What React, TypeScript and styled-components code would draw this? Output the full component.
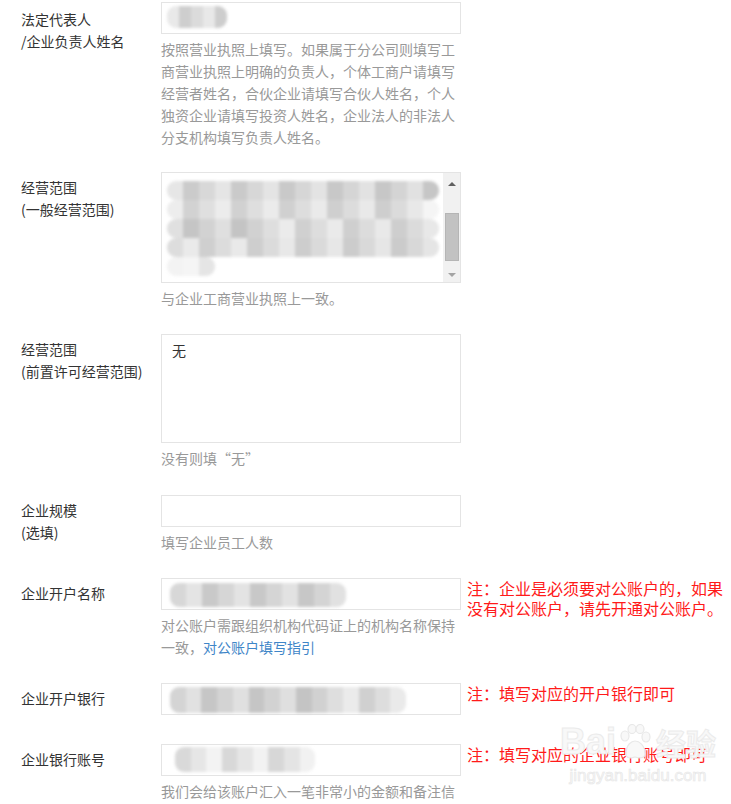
import React from 'react';
import styled, { createGlobalStyle } from 'styled-components';

const GlobalStyle = createGlobalStyle`
  html, body {
    margin: 0;
    background: #fff;
  }
  body {
    font-family: "Noto Sans CJK SC", "Noto Sans", sans-serif;
    font-size: 14px;
    color: #333;
  }
`;

const Page = styled.div`
  position: relative;
  height: 804px;
  overflow: hidden;
  padding: 2px 0 0 21px;
  box-sizing: border-box;
`;

const Row = styled.div<{ $gap: number }>`
  display: grid;
  grid-template-columns: 140px 300px 1fr;
  align-items: start;
  margin-bottom: ${(p) => p.$gap}px;
`;

const Label = styled.div`
  padding-top: 4px;
  font-size: 14px;
  line-height: 22px;
  color: #333;
`;

const Field = styled.div`
  display: flex;
  flex-direction: column;
`;

const Box = styled.div<{ $h: number }>`
  box-sizing: border-box;
  height: ${(p) => p.$h}px;
  border: 1px solid #e4e4e4;
  background: #fff;
  display: flex;
  align-items: flex-start;
  padding: 2px 0 0 5px;
`;

const AreaText = styled.div`
  padding: 2px 0 0 5px;
  line-height: 22px;
  font-size: 14px;
  color: #333;
`;

const Help = styled.div`
  margin-top: 4px;
  font-size: 14px;
  line-height: 22px;
  color: #999;
`;

const Link = styled.span`
  color: #3f86c8;
  cursor: pointer;
`;

const Note = styled.div`
  margin-left: 6px;
  font-size: 16px;
  line-height: 20px;
  color: #ff1a1a;
`;

/* blurred (redacted) content */
const Mosaic = styled.div`
  display: flex;
  flex-direction: column;
  filter: blur(1.6px);
  flex: 1;
  overflow: hidden;
`;

const MosaicRow = styled.div<{ $h: number }>`
  display: flex;
  height: ${(p) => p.$h}px;
`;

const Cell = styled.span<{ $tone: string; $w: number }>`
  display: block;
  width: ${(p) => p.$w}px;
  height: 100%;
  background: ${(p) => p.$tone};
  &:first-child {
    border-radius: 9px 0 0 9px;
  }
  &:last-child {
    border-radius: 0 9px 9px 0;
  }
`;

const Scrollbar = styled.div`
  width: 17px;
  background: #f1f1f1;
  display: flex;
  flex-direction: column;
  align-items: center;
  padding: 5px 0;
  box-sizing: border-box;
  margin-top: -2px;
  height: calc(100% + 2px);
`;

const Thumb = styled.div`
  width: 14px;
  height: 48px;
  background: #c2c2c2;
  border: 1px solid #b5b5b5;
  box-sizing: border-box;
  margin-top: 27px;
`;

const Arrow = styled.div<{ $up?: boolean }>`
  width: 0;
  height: 0;
  border-left: 4px solid transparent;
  border-right: 4px solid transparent;
  ${(p) =>
    p.$up
      ? 'border-bottom: 4px solid #606060;'
      : 'border-top: 4px solid #a3a3a3;'}
  margin-top: ${(p) => (p.$up ? '4px' : '0')};
`;

const Spacer = styled.div`
  flex: 1;
`;

const Watermark = styled.div`
  position: absolute;
  left: 560px;
  top: 722px;
  display: flex;
  flex-direction: column;
  align-items: center;
  pointer-events: none;
  color: #f8f8f8;
  -webkit-text-stroke: 1px #ebebeb;
  font-family: "Liberation Sans", Arial, sans-serif;
`;

const MarkTop = styled.div`
  display: flex;
  align-items: flex-end;
  font-size: 36px;
  font-weight: bold;
  line-height: 40px;
`;

const MarkCjk = styled.span`
  font-family: "Noto Sans CJK SC", sans-serif;
  font-size: 30px;
  margin-left: 2px;
`;

const MarkUrl = styled.div`
  font-size: 17px;
  line-height: 20px;
  margin-top: 4px;
  -webkit-text-stroke: 0.6px #e6e6e6;
`;

const shade = (seed: number, n: number, light = 0) =>
  Array.from({ length: n }, (_, i) => {
    const v = 196 + ((seed * 37 + i * 53) % 40) + light;
    const c = Math.min(v, 245);
    return `rgb(${c},${c},${c})`;
  });

const Blur: React.FC<{ rows: string[][]; w: number; h: number }> = ({ rows, w, h }) => (
  <Mosaic>
    {rows.map((r, i) => (
      <MosaicRow key={i} $h={h}>
        {r.map((t, j) => (
          <Cell key={j} $tone={t} $w={w} />
        ))}
      </MosaicRow>
    ))}
  </Mosaic>
);

const Paw = () => (
  <svg width="34" height="36" viewBox="0 0 34 36" style={{ margin: '0 2px 2px' }}>
    <g fill="#f8f8f8" stroke="#e8e8e8" strokeWidth="1.2">
      <ellipse cx="7" cy="12" rx="4" ry="5" />
      <ellipse cx="14" cy="5" rx="4" ry="4.5" />
      <ellipse cx="22" cy="5" rx="4" ry="4.5" />
      <ellipse cx="28" cy="13" rx="4" ry="5" />
      <path d="M8 30 C8 20 14 17 17 17 C21 17 27 21 27 30 C27 35 20 34 17 33 C14 34 8 35 8 30 Z" />
    </g>
  </svg>
);

export default function App() {
  return (
    <Page>
      <GlobalStyle />

      <Row $gap={24}>
        <Label style={{ paddingTop: 6 }}>
          法定代表人
          <br />
          /企业负责人姓名
        </Label>
        <Field>
          <Box $h={32}>
            <div style={{ width: 62, display: 'flex', paddingTop: 1 }}>
              <Blur rows={[shade(1, 5)]} w={12} h={22} />
            </div>
          </Box>
          <Help>
            按照营业执照上填写。如果属于分公司则填写工商营业执照上明确的负责人，个体工商户请填写经营者姓名，合伙企业请填写合伙人姓名，个人独资企业请填写投资人姓名，企业法人的非法人分支机构填写负责人姓名。
          </Help>
        </Field>
      </Row>

      <Row $gap={25}>
        <Label>
          经营范围
          <br />
          (一般经营范围)
        </Label>
        <Field>
          <Box $h={111}>
            <div style={{ width: 274, display: 'flex', paddingTop: 6 }}>
              <Blur
                rows={[
                  shade(2, 17),
                  shade(3, 17, 10),
                  shade(4, 17),
                  shade(5, 17),
                  shade(6, 3, 25),
                ]}
                w={16}
                h={19}
              />
            </div>
            <Spacer />
            <Scrollbar>
              <Arrow $up />
              <Thumb />
              <Spacer />
              <Arrow />
            </Scrollbar>
          </Box>
          <Help>与企业工商营业执照上一致。</Help>
        </Field>
      </Row>

      <Row $gap={26}>
        <Label>
          经营范围
          <br />
          (前置许可经营范围)
        </Label>
        <Field>
          <Box $h={109}>
            <AreaText>无</AreaText>
          </Box>
          <Help>没有则填“无”</Help>
        </Field>
      </Row>

      <Row $gap={25}>
        <Label>
          企业规模
          <br />
          (选填)
        </Label>
        <Field>
          <Box $h={32} />
          <Help>填写企业员工人数</Help>
        </Field>
      </Row>

      <Row $gap={25}>
        <Label>企业开户名称</Label>
        <Field>
          <Box $h={32}>
            <div style={{ width: 176, display: 'flex', paddingTop: 2, marginLeft: 3 }}>
              <Blur rows={[shade(7, 11)]} w={16} h={24} />
            </div>
          </Box>
          <Help>
            对公账户需跟组织机构代码证上的机构名称保持一致，<Link>对公账户填写指引</Link>
          </Help>
        </Field>
        <Note>
          注：企业是必须要对公账户的，如果
          <br />
          没有对公账户，请先开通对公账户。
        </Note>
      </Row>

      <Row $gap={29}>
        <Label>企业开户银行</Label>
        <Field>
          <Box $h={32}>
            <div style={{ width: 236, display: 'flex', paddingTop: 1, marginLeft: 3 }}>
              <Blur rows={[shade(8, 15)]} w={16} h={26} />
            </div>
          </Box>
        </Field>
        <Note>注：填写对应的开户银行即可</Note>
      </Row>

      <Row $gap={0}>
        <Label>企业银行账号</Label>
        <Field>
          <Box $h={32}>
            <div style={{ width: 140, display: 'flex', marginLeft: 8 }}>
              <Blur rows={[shade(9, 9, 8)]} w={16} h={25} />
            </div>
          </Box>
          <Help>我们会给该账户汇入一笔非常小的金额和备注信息</Help>
        </Field>
        <Note>注：填写对应的企业银行账号即可</Note>
      </Row>

      <Watermark>
        <MarkTop>
          Bai
          <Paw />
          <MarkCjk>经验</MarkCjk>
        </MarkTop>
        <MarkUrl>jingyan.baidu.com</MarkUrl>
      </Watermark>
    </Page>
  );
}
